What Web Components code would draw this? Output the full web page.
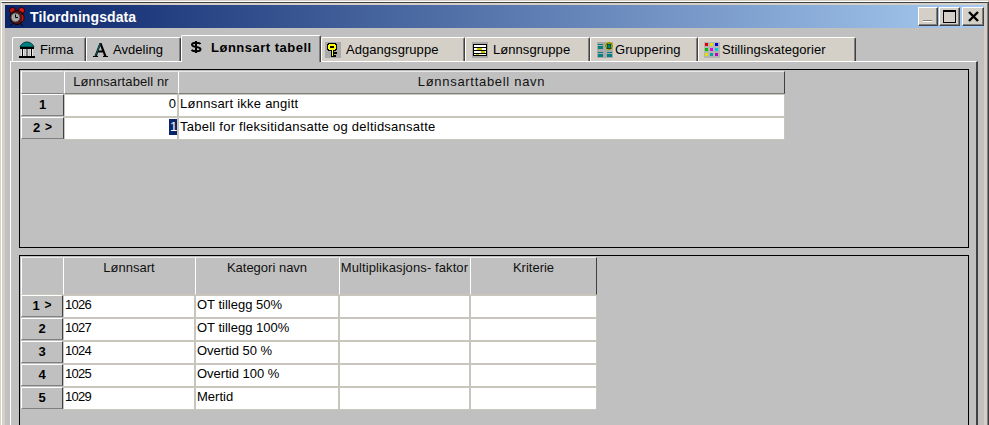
<!DOCTYPE html>
<html>
<head>
<meta charset="utf-8">
<title>Tilordningsdata</title>
<style>
  html, body { margin: 0; height: 425px; overflow: hidden; background: #c0c0c0; }
  body { font: 13px "Liberation Sans", Arial, sans-serif; color: #000; }
</style>
</head>
<body>
<app-window>
  <win-titlebar slot="title" caption="Tilordningsdata"></win-titlebar>
  <tab-strip slot="tabs"></tab-strip>
  <data-grid id="upper"></data-grid>
  <data-grid id="lower"></data-grid>
</app-window>

<script>
  // small pixel icons
  const ICONS = {
    bank: { w: 18, h: 18, crisp: false, svg: `
      <path d="M2 6 C3 3 6 1 9 1 C12 1 15 3 16 6 Z" fill="#008080" stroke="#003c3c"/>
      <rect x="2" y="6" width="14" height="2" fill="#000"/>
      <rect x="3" y="8" width="3" height="7" fill="#e8e8e8"/><rect x="4" y="8" width="1" height="7" fill="#000"/>
      <rect x="7.5" y="8" width="3" height="7" fill="#e8e8e8"/><rect x="8.5" y="8" width="1" height="7" fill="#000"/>
      <rect x="12" y="8" width="3" height="7" fill="#e8e8e8"/><rect x="13" y="8" width="1" height="7" fill="#000"/>
      <rect x="1" y="15" width="16" height="2" fill="#000"/>` },
    letter: { w: 15, h: 15, crisp: false, svg: `
      <path d="M0 15 H5 V14 H4 L5 10.5 H10 L11 14 H10 V15 H15 V14 H13.5 L8.5 1 H6.5 L1.5 14 H0 Z M5.7 8.5 L7.3 4 L9 8.5 Z" fill="#000" fill-rule="evenodd"/>
      <path d="M6.5 1.5 H7.5 V3.5 L3 14 H2 Z" fill="#0a5a5a"/>` },
    dollar: { w: 12, h: 12, crisp: false, svg: `
      <path d="M10.500 3 C9.500 1.200 2 1 2 3.800 C2 6.800 10.500 5.200 10.500 8.200 C10.500 11 3.500 10.800 1.500 9 M6 0 V12" fill="none" stroke="#000" stroke-width="2"/>` },
    key: { w: 16, h: 16, crisp: true, svg: `
      <rect width="16" height="16" fill="#a9a9a9"/>
      <path d="M3 1 H11 V2 H12 V8 H11 V9 H9 V10 H12 V12 H9 V13 H11 V15 H6 V9 H3 V8 H2 V2 H3 Z" fill="#000"/>
      <path d="M4 2 H10 V3 H11 V7 H10 V8 H8 V11 H11 V11 H8 V14 H10 V14 H7 V8 H4 V7 H3 V3 H4 Z" fill="#ffff00"/>
      <rect x="5" y="4" width="4" height="2" fill="#000"/>` },
    board: { w: 16, h: 16, crisp: true, svg: `
      <rect width="16" height="16" fill="#a9a9a9"/>
      <rect x="1.5" y="2.5" width="13" height="11" fill="#fff" stroke="#000"/>
      <rect x="2" y="5" width="12" height="1" fill="#000"/><rect x="2" y="8" width="12" height="1" fill="#000"/>
      <rect x="2" y="11" width="12" height="1" fill="#000"/>
      <rect x="5" y="6" width="5" height="2" fill="#c8c800"/><rect x="9" y="9" width="4" height="2" fill="#c8c800"/>
      <rect x="4" y="12" width="3" height="1" fill="#c8c800"/>` },
    groups: { w: 16, h: 16, crisp: false, svg: `
      <rect width="16" height="16" fill="#a9a9a9"/>
      <rect x="1" y="2" width="5" height="5" fill="#008080"/><rect x="1" y="3" width="5" height="1" fill="#a9a9a9"/>
      <rect x="1" y="10" width="5" height="5" fill="#008080"/><rect x="1" y="11" width="5" height="1" fill="#a9a9a9"/>
      <rect x="10" y="10" width="5" height="5" fill="#008080"/><rect x="10" y="11" width="5" height="1" fill="#a9a9a9"/>
      <circle cx="12" cy="4" r="4" fill="#ffff00"/><circle cx="12" cy="4" r="3.5" fill="none" stroke="#000" stroke-width=".5"/>
      <rect x="10" y="2" width="4" height="4.5" fill="#008080" stroke="#000" stroke-width=".6"/>` },
    dots: { w: 16, h: 16, crisp: true, svg: `
      <rect width="16" height="16" fill="#b4b4b4"/>
      <rect x="1" y="1" width="3" height="3" fill="#e00000"/><rect x="6" y="1" width="3" height="3" fill="#e0e000"/><rect x="11" y="1" width="3" height="3" fill="#0000e0"/>
      <rect x="1" y="6" width="3" height="3" fill="#00c000"/><rect x="6" y="6" width="3" height="3" fill="#e000e0"/><rect x="11" y="6" width="3" height="3" fill="#00d0d0"/>
      <rect x="1" y="11" width="3" height="3" fill="#e0e000"/><rect x="6" y="11" width="3" height="3" fill="#00a0a0"/><rect x="11" y="11" width="3" height="3" fill="#c000c0"/>` },
    clock: { w: 16, h: 19, svg: `
      <circle cx="3.5" cy="3.5" r="3" fill="#c01010" stroke="#200"/><circle cx="12.5" cy="3.5" r="3" fill="#e01818" stroke="#200"/>
      <circle cx="8" cy="10.5" r="7" fill="#501010" stroke="#100"/><circle cx="6.5" cy="10.5" r="4.5" fill="#a8a8a8" stroke="#444"/>
      <path d="M6.5 7.5 V10.5 H9" fill="none" stroke="#000"/><path d="M13 8 A6 6 0 0 1 13 14" fill="none" stroke="#d01010" stroke-width="1.5"/>
      <path d="M3 17 L1.5 19 M12 17 L14 19" stroke="#000"/>` }
  };

  class AppWindow extends HTMLElement {
    constructor() {
      super();
      this.attachShadow({ mode: "open" });
      this.shadowRoot.innerHTML = `
        <style>
          :host { display: block; width: 989px; height: 425px; overflow: hidden; box-sizing: border-box;
            background: #c0c0c0; border-top: 1px solid #d4d0c8; }
          .outer { height: 500px; box-sizing: border-box; border: 1px solid #fff; border-right-color: #404040; border-left-color: #d4d0c8; }
          .inner { height: 100%; box-sizing: border-box; border-top: 1px solid #404040; border-left: 1px solid #fff;
            border-right: 1px solid #808080; padding: 2px 3px 0 3px; background: #d4d0c8; }
          .tabs-area { background: #c0c0c0; padding: 7px 0 0 5px; height: 100%; box-sizing: border-box; }
          .panel { width: 968px; box-sizing: border-box; border: 1px solid #fff; border-right: 2px solid #404040;
            border-bottom: 0; padding: 7px 8px 0 8px; height: 400px; display: flex; flex-direction: column; gap: 7px; }
          ::slotted(tab-strip) { position: relative; z-index: 1; margin-bottom: -1px; }
        </style>
        <div class="outer"><div class="inner">
          <slot name="title"></slot>
          <div class="tabs-area">
            <slot name="tabs"></slot>
            <div class="panel"><slot></slot></div>
          </div>
        </div></div>`;
    }
  }

  class WinTitlebar extends HTMLElement {
    constructor() {
      super();
      this.attachShadow({ mode: "open" });
    }
    connectedCallback() {
      this.shadowRoot.innerHTML = `
        <style>
          :host { display: flex; align-items: center; height: 23px; box-sizing: border-box; padding: 0 0 0 4px;
            background: linear-gradient(90deg, #0a246a, #a6caf0); color: #fff; }
          svg.app { width: 16px; height: 19px; margin-right: 5px; flex: none; }
          .caption { font: bold 14px "Liberation Sans", Arial, sans-serif; flex: 1; letter-spacing: .1px; }
          .btn { height: 19px; box-sizing: border-box; background: #d4d0c8;
            border: 1px solid; border-color: #fff #404040 #404040 #fff; box-shadow: inset -1px -1px 0 #808080;
            display: flex; align-items: center; justify-content: center; }
          .btn svg { width: 13px; height: 13px; display: block; }
        </style>
        <svg class="app" viewBox="0 0 16 19">${ICONS.clock.svg}</svg>
        <span class="caption">${this.getAttribute("caption")}</span>
        <span class="btn" style="width:20px;margin-right:1px"><svg viewBox="0 0 13 13" shape-rendering="crispEdges"><rect x="1" y="10" width="9" height="1" fill="#808080"/><rect x="1" y="11" width="9" height="1" fill="#fff"/></svg></span>
        <span class="btn" style="width:21px;margin-right:2px"><svg viewBox="0 0 13 13" shape-rendering="crispEdges"><path d="M0 0 H13 V13 H0 Z M1 2 V12 H12 V2 Z" fill="#000" fill-rule="evenodd"/></svg></span>
        <span class="btn" style="width:22px"><svg viewBox="0 0 13 13"><path d="M2 2 L11 11 M11 2 L2 11" stroke="#000" stroke-width="2.4" fill="none"/></svg></span>`;
    }
  }

  class TabStrip extends HTMLElement {
    constructor() {
      super();
      this.attachShadow({ mode: "open" });
    }
    connectedCallback() {
      // label, icon, width, left pad, gap icon-label
      const tabs = [
        ["Firma", "bank", 74, 5, 4],
        ["Avdeling", "letter", 95, 6, 5],
        ["Lønnsart tabell", "dollar", 140, 8, 9, true],
        ["Adgangsgruppe", "key", 144, 3, 5],
        ["Lønnsgruppe", "board", 125, 6, 5],
        ["Gruppering", "groups", 108, 6, 2],
        ["Stillingskategorier", "dots", 158, 5, 2]
      ];
      this.shadowRoot.innerHTML = `
        <style>
          :host { display: flex; align-items: flex-start; height: 27px; padding-left: 2px; }
          .tab { box-sizing: border-box; height: 24px; margin-top: 2px; display: flex; align-items: center;
            background: #c0c0c0; border: 1px solid; border-color: #fff #404040 transparent #fff; border-bottom: 0;
            box-shadow: inset -1px 0 0 #808080; border-radius: 2px 2px 0 0; white-space: nowrap; }
          .tab.tint { background: #d4d0c8; }
          .tab.on { height: 27px; margin-top: 0; font-weight: bold; letter-spacing: .5px; padding-bottom: 4px; background: #c0c0c0; }
          span { letter-spacing: .05px; }
          .on span { letter-spacing: .5px; }
          svg { flex: none; }
        </style>
        ${tabs.map(([label, icon, w, pad, gap, on], i) => {
          const ic = ICONS[icon];
          return `
          <div class="tab ${on ? "on" : ""} ${i > 2 ? "tint" : ""}" style="width:${w}px;padding-left:${pad}px;gap:${gap}px">
            <svg width="${ic.w}" height="${ic.h}" viewBox="0 0 ${ic.w} ${ic.h}" ${ic.crisp ? 'shape-rendering="crispEdges"' : ""}>${ic.svg}</svg>
            <span>${label}</span>
          </div>`;
        }).join("")}`;
    }
  }

  class DataGrid extends HTMLElement {
    constructor() {
      super();
      this.attachShadow({ mode: "open" });
    }
    configure({ indicator, columns, headerHeight, headerLine, rows, marker, height, selected }) {
      const track = [indicator, ...columns.map(c => c.width)].map(w => w + "px").join(" ");
      const head = `<div class="c head"></div>` +
        columns.map((c, i) => `<div class="c head${i === columns.length - 1 ? " last" : ""}" style="letter-spacing:${c.titleSpacing || 0}px">${c.title}</div>`).join("");
      const body = rows.map((row, r) => {
        const ind = `<div class="c ind"><b>${r + 1}</b>${r === marker ? '<b class="mark">&gt;</b>' : ""}</div>`;
        return ind + row.map((val, i) => {
          const right = columns[i].right ? " right" : "";
          const text = r === selected?.row && i === selected?.col ? `<mark>${val}</mark>` : val;
          return `<div class="c cell${right}" style="letter-spacing:${columns[i].spacing || 0}px">${text}</div>`;
        }).join("");
      }).join("");
      this.shadowRoot.innerHTML = `
        <style>
          :host { display: block; box-sizing: border-box; width: 950px; height: ${height}px; border: 1px solid #000; padding: 1px; flex: none; }
          .g { display: grid; grid-template-columns: ${track}; grid-template-rows: ${headerHeight}px; grid-auto-rows: 23px; }
          .c { box-sizing: border-box; overflow: hidden; white-space: nowrap; }
          .head { background: #c0c0c0; border: 1px solid; border-color: #e8e8e8 #c0c0c0 ${headerLine} #fff; text-align: center;
            padding-top: 3px; line-height: 14px; color: #111; }
          .head.last { border-right-color: #404040; }
          .ind { background: #c0c0c0; border: 1px solid; border-color: #fff #404040 #808080 #fff; margin-bottom: 1px; padding-bottom: 2px;
            display: flex; justify-content: center; align-items: center; gap: 5px; font: bold 13px "Liberation Sans", Arial, sans-serif; }
          .mark { font-size: 12px; }
          .cell { background: #fff; border: 1px solid #c8c5bd; padding: 0 0 0 1px; line-height: 17px; }
          .right { text-align: right; padding: 0 1px 0 0; }
          mark { display: inline-block; background: #0a246a; color: #fff; padding: 0 0 0 1px; line-height: 16px; margin-right: -1px; width: 8px; box-sizing: border-box; text-align: center; }
        </style>
        <div class="g">${head}${body}</div>`;
    }
  }

  customElements.define("app-window", AppWindow);
  customElements.define("win-titlebar", WinTitlebar);
  customElements.define("tab-strip", TabStrip);
  customElements.define("data-grid", DataGrid);

  document.querySelector("#upper").configure({
    indicator: 43,
    columns: [
      { title: "Lønnsartabell nr", width: 114, right: true, titleSpacing: .1 },
      { title: "Lønnsarttabell navn", width: 607, spacing: .25, titleSpacing: .7 }
    ],
    headerHeight: 23,
    headerLine: "#808080",
    height: 179,
    marker: 1,
    selected: { row: 1, col: 0 },
    rows: [["0", "Lønnsart ikke angitt"], ["1", "Tabell for fleksitidansatte og deltidsansatte"]]
  });
  document.querySelector("#lower").configure({
    indicator: 42,
    columns: [
      { title: "Lønnsart", width: 132, spacing: -.7 },
      { title: "Kategori navn", width: 144 },
      { title: "Multiplikasjons- faktor", width: 131, titleSpacing: .1 },
      { title: "Kriterie", width: 127 }
    ],
    headerHeight: 38,
    headerLine: "#c8c5bd",
    height: 200,
    marker: 0,
    rows: [
      ["1026", "OT tillegg 50%", "", ""],
      ["1027", "OT tillegg 100%", "", ""],
      ["1024", "Overtid 50 %", "", ""],
      ["1025", "Overtid 100 %", "", ""],
      ["1029", "Mertid", "", ""]
    ]
  });
</script>
</body>
</html>
